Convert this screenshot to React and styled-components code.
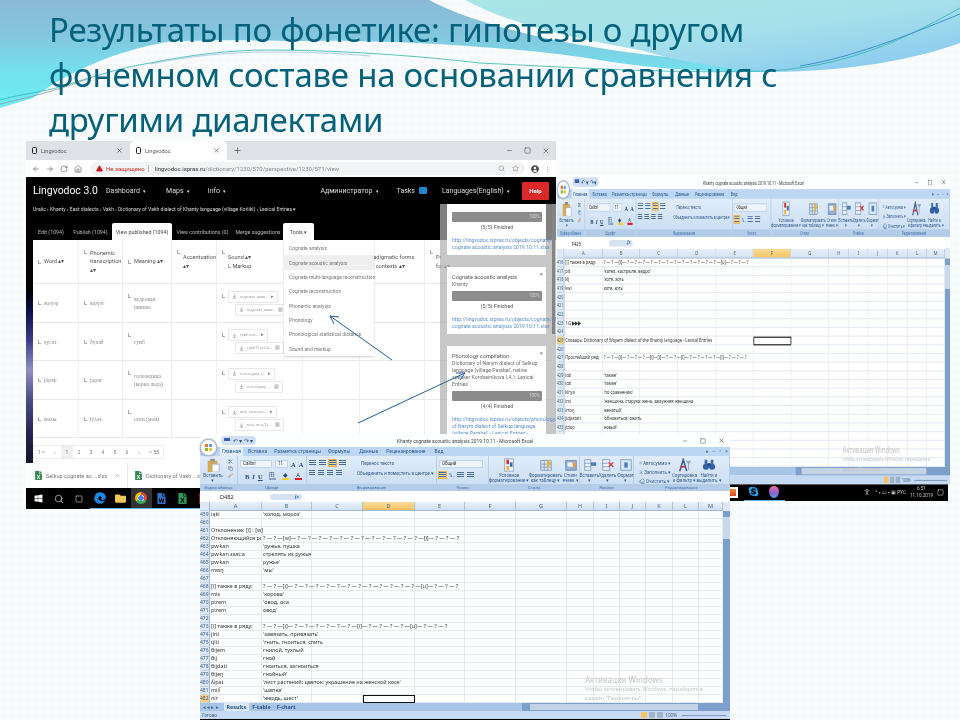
import React from "react";
import styled, { createGlobalStyle } from "styled-components";
import { ArrowLeft, ArrowRight, RotateCw, Home, Search, Star, Plus, X, Minus, Square, ChevronUp, TriangleAlert, PersonStanding, Scissors, Copy, Brush, Sigma, Eraser, ArrowDownToLine } from "lucide-react";
import { FaWindows, FaEdge, FaFolder, FaFileWord, FaFileExcel, FaSkype, FaUserCircle } from "react-icons/fa";

const GlobalStyle = createGlobalStyle`
  * { box-sizing: border-box; }
  html, body { margin: 0; padding: 0; background: #fff; }
  body { font-family: "Noto Sans", sans-serif; }
`;

const Slide = styled.div`
  position: relative;
  width: 960px;
  height: 720px;
  overflow: hidden;
  background: repeating-conic-gradient(#f2f8fa 0 25%, #fff 0 50%) 0 0 / 2px 2px;
`;

const Wave = styled.svg`
  position: absolute;
  top: 0;
  left: 0;
`;

const Title = styled.h1`
  position: relative;
  margin: 0;
  padding: 7px 0 0 49px;
  font: 400 33px/45px "Noto Sans", sans-serif;
  letter-spacing: -0.25px;
  color: #04617b;
  filter: blur(0.25px);
`;

const Arrows = styled.svg`
  position: absolute;
  top: 0;
  left: 0;
  pointer-events: none;
`;

/* ---------- browser window ---------- */

const BrowserWindow = styled.div`
  position: absolute;
  left: 26px;
  top: 141px;
  width: 530px;
  height: 368px;
  display: flex;
  flex-direction: column;
  background: #fff;
  filter: blur(0.35px);
  color: #666;
  font: 400 5.4px Roboto, sans-serif;
`;

const TabStrip = styled.div`
  height: 19px;
  display: flex;
  align-items: stretch;
  background: #dee1e6;
  color: #555;
`;

const BrowserTab = styled.div`
  width: ${(p) => p.$w}px;
  display: flex;
  align-items: center;
  gap: 4px;
  padding: 0 7px 0 6px;
  border-radius: 5px 5px 0 0;
  background: ${(p) => (p.$active ? "#fff" : "transparent")};
  font-size: 5.6px;
  span { flex: 1; }
`;

const PageIcon = styled.i`
  width: 5px;
  height: 7px;
  border: 1.5px solid #222;
  border-radius: 1.5px;
`;

const WinButtons = styled.div`
  margin-left: auto;
  display: flex;
  align-items: center;
  gap: 11px;
  padding-right: 6px;
  color: #555;
`;

const AddressRow = styled.div`
  height: 17px;
  display: flex;
  align-items: center;
  gap: 6px;
  padding: 0 6px;
  color: #666;
`;

const AddressPill = styled.div`
  flex: 1;
  height: 13px;
  display: flex;
  align-items: center;
  gap: 3px;
  padding: 0 6px;
  margin-left: 2px;
  border-radius: 7px;
  background: #f1f3f4;
  font-size: 6px;
  white-space: nowrap;
  color: #8a8a8a;
  b { font-weight: 400; color: #333; }
  em { font-style: normal; color: #d93025; padding-right: 3px; border-right: 1px solid #bbb; margin-right: 3px; }
`;

const NavBar = styled.div`
  height: 63px;
  padding: 0 7px;
  display: flex;
  flex-direction: column;
  background: #000;
  color: #ddd;
`;

const NavTop = styled.div`
  height: 27px;
  display: flex;
  align-items: center;
  font-size: 7px;
`;

const Brand = styled.div`
  flex: none;
  width: 73px;
  font-size: 10.4px;
  color: #fff;
  white-space: nowrap;
`;

const NavItem = styled.div`
  margin-right: ${(p) => p.$gap || 14}px;
  margin-left: ${(p) => (p.$push ? "auto" : "0")};
  white-space: nowrap;
  &::after { content: " ▾"; font-size: 5px; padding-left: 2px; }
`;

const TasksBadge = styled.span`
  display: inline-block;
  width: 8px;
  height: 7px;
  margin: 0 15px 0 4px;
  border-radius: 1px;
  background: #2185d0;
`;

const HelpButton = styled.div`
  flex: none;
  width: 27px;
  height: 18px;
  display: flex;
  align-items: center;
  justify-content: center;
  border-radius: 1px;
  background: #db2828;
  color: #fff;
  font-weight: 700;
  font-size: 6px;
`;

const Breadcrumb = styled.div`
  height: 19px;
  padding-top: 2px;
  font-size: 5.1px;
  color: #ddd;
  white-space: nowrap;
`;

const TabsRow = styled.div`
  flex: 1;
  display: flex;
  align-items: stretch;
  font-size: 5.3px;
`;

const PageTab = styled.div`
  flex: none;
  width: ${(p) => p.$w}px;
  display: flex;
  align-items: center;
  justify-content: center;
  border-radius: 2px 2px 0 0;
  background: ${(p) => (p.$active ? "#fff" : "transparent")};
  color: ${(p) => (p.$active ? "#444" : "#bbb")};
  white-space: nowrap;
`;

const BrowserBody = styled.div`
  position: relative;
  height: 223px;
  display: flex;
  overflow: hidden;
`;

const GalaxyStrip = styled.div`
  flex: none;
  width: 7px;
  background: linear-gradient(#000 0 22%, #0d0d4a 32%, #3c3c8c 45%, #8f8fc0 58%, #4a4a86 72%, #22224e 88%, #15152e);
`;

const DictTable = styled.div`
  flex: 1;
  display: grid;
  grid-template-columns: 46px 44px 49px 45px 86px 57px 65px 131px;
  grid-template-rows: 44px 39px 38px 39px 38px 25px;
`;

const Cell = styled.div`
  display: flex;
  align-items: center;
  gap: 3px;
  padding: 0 4px 0 5px;
  border-right: 1px solid #eee;
  border-bottom: 1px solid #e9e9e9;
  font: ${(p) => (p.$head ? '400 5.6px/8.4px Roboto' : '400 5.6px/8px "Liberation Serif"')};
  color: ${(p) => (p.$head ? "#555" : "#8a8a8a")};
`;

const Elbow = styled.i`
  flex: none;
  align-self: ${(p) => (p.$top ? "flex-start" : "center")};
  display: inline-block;
  width: 3px;
  height: 4px;
  margin-top: ${(p) => (p.$top ? 10 : 0)}px;
  border-left: 1px solid #aaa;
  border-bottom: 1px solid #aaa;
`;

const SoundStack = styled.div`
  display: flex;
  flex-direction: column;
  gap: 1px;
`;

const SoundChip = styled.div`
  height: 12px;
  display: inline-flex;
  align-items: center;
  gap: 3px;
  width: fit-content;
  margin-left: ${(p) => (p.$second ? 7 : 0)}px;
  padding: 0 3px;
  border: 1px solid #e8e8e8;
  border-radius: 1px;
  font-size: 4px;
  color: #999;
  white-space: nowrap;
  svg { color: #777; }
  i { font-style: normal; color: #777; font-size: 5px; }
`;

const ToolsMenu = styled.div`
  position: absolute;
  left: 258px;
  top: 0;
  width: 90px;
  height: 116px;
  display: flex;
  flex-direction: column;
  padding-top: 1px;
  background: #fff;
  box-shadow: 0 1px 2px rgba(0, 0, 0, 0.2);
`;

const MenuItem = styled.div`
  height: 14.4px;
  display: flex;
  align-items: center;
  padding-left: 5px;
  background: ${(p) => (p.$hot ? "#efefef" : "transparent")};
  font-size: 5px;
  color: #777;
  white-space: nowrap;
`;

const Pager = styled.div`
  position: absolute;
  left: 7px;
  top: 205px;
  height: 14px;
  display: flex;
  background: #fff;
  border: 1px solid #eee;
  font-size: 5px;
  color: #777;
`;

const PageNum = styled.div`
  width: ${(p) => p.$w || 12}px;
  display: flex;
  align-items: center;
  justify-content: center;
  background: ${(p) => (p.$on ? "#f0f0f0" : "transparent")};
`;

const Notifications = styled.div`
  position: absolute;
  left: 414px;
  top: 63px;
  width: 116px;
  height: 232px;
  display: flex;
  flex-direction: column;
  gap: 12px;
  padding: 0 10px 0 7px;
  overflow: hidden;
  background: rgba(178, 178, 178, 0.72);
  &::after {
    content: "";
    position: absolute;
    right: 1px;
    top: 0;
    width: 3px;
    height: 130px;
    background: #858585;
  }
`;

const NoteCard = styled.div`
  position: relative;
  flex: none;
  padding: ${(p) => (p.$first ? 3 : 6)}px 4px 4px 5px;
  background: #fff;
  color: #6d6d6d;
  font-size: 5.2px;
  line-height: 7px;
`;

const NoteTitle = styled.div`
  font-size: 5.6px;
  line-height: 8px;
  color: #555;
`;

const NoteClose = styled.span`
  position: absolute;
  right: 3px;
  top: 3px;
  font-size: 6px;
  color: #666;
`;

const Progress = styled.div`
  height: 10px;
  margin-top: ${(p) => (p.$first ? 5 : 3)}px;
  padding-right: 2px;
  border-radius: 1px;
  background: #8c8c8c;
  color: #d5d5d5;
  text-align: right;
  font-size: 4.6px;
  line-height: 10px;
`;

const Finished = styled.div`
  margin-top: 2px;
  text-align: center;
  line-height: 7px;
  color: #555;
`;

const NoteLink = styled.div`
  margin-top: 6px;
  color: #5d8fca;
  white-space: nowrap;
`;

const DownloadBar = styled.div`
  height: 25px;
  display: flex;
  align-items: center;
  padding-left: 8px;
  background: #fff;
  font-size: 5.6px;
  color: #777;
`;

const DownloadItem = styled.div`
  flex: none;
  display: flex;
  align-items: center;
  gap: 3px;
  width: 94px;
  height: 100%;
  padding-left: ${(p) => (p.$sep ? 0 : 6)}px;
  color: #777;
  white-space: nowrap;
  border-right: ${(p) => (p.$sep ? "1px solid #e8e8e8" : "none")};
  svg:first-child { color: #2f8a4f; }
`;

const Taskbar = styled.div`
  height: 21px;
  display: flex;
  align-items: stretch;
  padding-left: 2px;
  background: #000;
  color: #fff;
`;

const TaskSlot = styled.div`
  width: 20.6px;
  display: flex;
  align-items: center;
  justify-content: center;
  background: ${(p) => (p.$on ? "#333" : "transparent")};
  border-bottom: ${(p) => (p.$used ? "1px solid #5fb4e8" : "none")};
  color: ${(p) => p.$color || "#fff"};
`;

const ChromeBall = styled.i`
  width: 12px;
  height: 12px;
  border-radius: 50%;
  background: radial-gradient(#4285f4 0 30%, #fff 31% 38%, transparent 39%), conic-gradient(#ea4335 0 33%, #34a853 33% 66%, #fbbc05 66%);
`;

const PinkDrop = styled.i`
  width: 10px;
  height: 12px;
  border-radius: 50% 50% 50% 50% / 40% 40% 60% 60%;
  background: linear-gradient(#f06da8, #8b5fd0 60%, #3ab0e0);
`;

const OrangeTile = styled.i`
  width: 10px;
  height: 11px;
  background: linear-gradient(#ef8b3c, #d84a2b);
  border: 2px solid #fff;
`;

/* ---------- excel window ---------- */

const ExcelFrame = styled.div`
  position: absolute;
  left: ${(p) => p.$x}px;
  top: ${(p) => p.$y}px;
  width: 530px;
  display: flex;
  flex-direction: column;
  transform-origin: 0 0;
  transform: scale(${(p) => p.$sx}, ${(p) => p.$sy});
  background: #fff;
  filter: blur(0.3px);
  color: #333;
  font-size: 5.45px;
`;

const TitleBar = styled.div`
  position: relative;
  height: 13px;
  display: flex;
  align-items: center;
  justify-content: center;
  background: #fdfeff;
  color: #444;
  font: 400 4.9px Roboto, sans-serif;
`;

const QuickAccess = styled.div`
  position: absolute;
  left: 21px;
  top: 2px;
  height: 9px;
  display: flex;
  align-items: center;
  gap: 3px;
  padding: 0 3px;
  border-radius: 4px;
  background: #cfe0f5;
  color: #1f4e8a;
  font-size: 6px;
`;

const SaveIcon = styled.i`
  width: 6px;
  height: 6px;
  background: linear-gradient(#3a5fb0 0 55%, #d8e4f4 55%);
`;

const OfficeButton = styled.div`
  position: absolute;
  left: 0;
  top: 5px;
  z-index: 2;
  width: 17px;
  height: 17px;
  display: grid;
  grid-template-columns: 1fr 1fr;
  gap: 1px;
  padding: 4px;
  border-radius: 50%;
  background: #fff;
  border: 1px solid #a9b9cc;
  box-shadow: 0 0 2px #7a8aa0;
  i:nth-child(1) { background: #e8762b; }
  i:nth-child(2) { background: #5aa8de; }
  i:nth-child(3) { background: #8cb63c; }
  i:nth-child(4) { background: #f2c230; }
`;

const FrameControls = styled.div`
  position: absolute;
  right: 5px;
  top: 0;
  height: 13px;
  display: flex;
  align-items: center;
  gap: 12px;
  color: #555;
`;

const RibbonTabs = styled.div`
  position: relative;
  height: 9px;
  display: flex;
  padding-left: 20px;
  background: #bcd6f3;
  color: #2a5a94;
  font: 400 5px/9px Roboto, sans-serif;
`;

const RibbonTab = styled.div`
  padding: 0 2px;
  margin-right: ${(p) => p.$gap || 3}px;
  border-radius: 2px 2px 0 0;
  background: ${(p) => (p.$active ? "#e3eefb" : "transparent")};
  white-space: nowrap;
`;

const RibbonHelp = styled.div`
  position: absolute;
  right: 2px;
  top: 0;
  display: flex;
  gap: 4px;
  color: #3e6cab;
  font-size: 5px;
`;

const Ribbon = styled.div`
  height: 35px;
  display: flex;
  background: linear-gradient(#e0ecfa, #c8dcf3);
  color: #34598c;
  font: 400 4.5px Roboto, sans-serif;
`;

const Group = styled.div`
  flex: none;
  width: ${(p) => p.$w}px;
  display: flex;
  flex-direction: column;
  border-right: 1px solid #b8cde6;
`;

const GroupBody = styled.div`
  flex: 1;
  min-height: 0;
  display: flex;
  align-items: ${(p) => (p.$stack ? "stretch" : "flex-start")};
  flex-direction: ${(p) => (p.$stack ? "column" : "row")};
  gap: ${(p) => (p.$stack ? 4 : 1)}px;
  padding: ${(p) => (p.$stack ? "4px 2px 0" : "2px 0 0 1px")};
`;

const GroupLabel = styled.div`
  flex: none;
  height: 7px;
  text-align: center;
  background: #b3cde9;
  color: #4472a8;
  font-size: 4.2px;
  line-height: 7px;
`;

const BigTool = styled.div`
  flex: none;
  width: ${(p) => p.$w}px;
  display: flex;
  flex-direction: column;
  align-items: center;
  gap: 1px;
  text-align: center;
  line-height: 5px;
  white-space: pre;
`;

const SmallTools = styled.div`
  flex: none;
  display: flex;
  flex-direction: column;
  justify-content: ${(p) => (p.$wide ? "flex-start" : "space-around")};
  gap: ${(p) => (p.$wide ? 3 : 2)}px;
  width: ${(p) => (p.$wide ? 36 : 8)}px;
  padding: ${(p) => (p.$wide ? "2px 0 0 4px" : "1px 0 0 2px")};
  color: #3a6298;
`;

const SmallTool = styled.div`
  display: flex;
  align-items: center;
  gap: 1px;
  white-space: nowrap;
`;

const ToolRow = styled.div`
  display: flex;
  align-items: center;
  gap: 3px;
  white-space: nowrap;
`;

const ToolLabel = styled.span`
  margin-left: ${(p) => p.$m}px;
`;

const Combo = styled.div`
  width: ${(p) => p.$w}px;
  height: 8px;
  padding-left: 2px;
  background: #eef4fb;
  border: 1px solid #c3d5ea;
  color: #333;
  line-height: 6px;
`;

const Fmt = styled.span`
  font: ${(p) => (p.$i ? "italic" : "normal")} 700 6.5px "Liberation Serif", serif;
  color: ${(p) => p.$c || "#27477c"};
  text-decoration: ${(p) => (p.$u ? "underline" : "none")};
`;

const ColorBar = styled.span`
  width: 7px;
  height: 8px;
  margin-left: 3px;
  border-bottom: 2px solid ${(p) => p.$c};
  color: #27477c;
  text-align: center;
  line-height: 6px;
  font-size: 5.6px;
`;

const AlignBtn = styled.i`
  width: 7px;
  height: 6px;
  background: repeating-linear-gradient(#4a6a96 0 1px, transparent 1px 2px);
  outline: ${(p) => (p.$on ? "1px solid #f0b040" : "none")};
  background-color: ${(p) => (p.$on ? "#fbd58a" : "transparent")};
`;

const FormulaBar = styled.div`
  height: 8px;
  margin-top: 2px;
  display: flex;
  align-items: center;
  background: #fff;
  font-size: 5.6px;
`;

const NameBox = styled.div`
  width: 70px;
  padding-left: 20px;
  color: #222;
`;

const FxBox = styled.div`
  width: 32px;
  height: 6px;
  border-radius: 3px;
  background: #d4e2f2;
  color: #2d5d95;
  text-align: right;
  padding-right: 3px;
  font: italic 700 5px/6px "Liberation Serif", serif;
`;

const SheetWrap = styled.div`
  position: relative;
  display: flex;
  flex: none;
`;

const Sheet = styled.div`
  width: 523px;
  margin-top: 1px;
  display: flex;
  flex-direction: column;
`;

const SheetRow = styled.div`
  display: flex;
  height: ${(p) => (p.$head ? 9 : 8)}px;
`;

const RowHead = styled.div`
  flex: none;
  width: 10px;
  padding-right: 1px;
  text-align: right;
  background: ${(p) => (p.$on ? "#f9cf7e" : "#dfe9f5")};
  border-right: 1px solid #9db8d8;
  border-bottom: 1px solid #c6d6e9;
  color: #3d5f8c;
  font-size: 5px;
  line-height: 7px;
`;

const ColHead = styled.div`
  flex: none;
  width: ${(p) => p.$w}px;
  text-align: center;
  background: ${(p) => (p.$on ? "linear-gradient(#f9dc9b, #f5c362)" : "linear-gradient(#eaf1fa, #d2e0f1)")};
  border-right: 1px solid #a9c1de;
  border-bottom: 1px solid #9db8d8;
  color: #3d5f8c;
  font-size: 5.6px;
  line-height: 8px;
`;

const GridCell = styled.div`
  position: relative;
  flex: none;
  width: ${(p) => p.$w}px;
  padding-left: 1px;
  border-right: 1px solid #e4eaf3;
  border-bottom: 1px solid #e4eaf3;
  line-height: 7px;
  white-space: nowrap;
  overflow: ${(p) => (p.$clip ? "hidden" : "visible")};
  outline: ${(p) => (p.$selected ? "1px solid #111" : "none")};
  outline-offset: -1px;
  span { position: relative; z-index: 1; }
`;

const VScroll = styled.div`
  width: 7px;
  margin-top: 1px;
  display: flex;
  flex-direction: column;
  background: #7c9fcc;
  &::before { content: ""; height: 9px; background: #dfe9f5; }
  &::after { content: ""; height: 22px; margin-top: 6px; background: #c9d9ec; }
`;

const Watermark = styled.div`
  position: absolute;
  left: ${(p) => p.$x}px;
  top: ${(p) => p.$y}px;
  color: #c6c6c6;
  font-size: 5.6px;
  line-height: 9px;
  white-space: nowrap;
  z-index: 3;
  strong { display: block; font-weight: 400; font-size: 8px; line-height: 10px; }
`;

const SheetTabs = styled.div`
  height: 8px;
  display: flex;
  align-items: center;
  background: #a9c5e6;
  color: #23508c;
  font-size: 5.4px;
  font-weight: 700;
`;

const TabArrows = styled.span`
  padding: 0 5px 0 3px;
  color: #4a6a96;
  font-size: 4.5px;
`;

const SheetTab = styled.span`
  padding: 0 3px;
  background: ${(p) => (p.$on ? "#dce9f8" : "transparent")};
`;

const HScroll = styled.div`
  margin-left: auto;
  width: 208px;
  height: 8px;
  padding: 1px 8px 1px 8px;
  background: #7c9fcc;
  &::before { content: ""; display: block; width: 168px; height: 100%; background: #c3d2e4; }
`;

const StatusBar = styled.div`
  height: 8px;
  display: flex;
  align-items: center;
  justify-content: space-between;
  padding-left: 2px;
  background: #c6dbf3;
  color: #3b628f;
  font-size: 4.6px;
`;

const ViewButtons = styled.div`
  display: flex;
  align-items: center;
  gap: 2px;
  padding-right: 4px;
  i { width: 6px; height: 6px; background: #9fb3c9; }
  i:first-child { background: #f3c468; }
  b { width: 44px; height: 1px; margin-left: 3px; background: #7f9cc0; }
`;

const BlackEdge = styled.div`
  height: 2px;
  background: #000;
`;

const RightTaskbar = styled.div`
  position: absolute;
  left: 557px;
  top: 483px;
  width: 391px;
  height: 18px;
  display: flex;
  align-items: stretch;
  padding-left: 166px;
  background: #000;
  color: #ccc;
  filter: blur(0.3px);
`;

const Tray = styled.div`
  margin-left: auto;
  display: flex;
  align-items: center;
  gap: 4px;
  padding-right: 4px;
  font: 400 4.6px Roboto, sans-serif;
  white-space: nowrap;
`;

const Clock = styled.div`
  text-align: center;
  line-height: 7px;
`;

const Tile = styled.svg`
  flex: none;
`;

/* big ribbon pictures, one little svg per kind */
const ToolGlyph = ({ kind, size = 14 }) => {
  const shapes = {
    paste: (
      <>
        <rect x="2" y="3" width="11" height="13" fill="#d9a94a" />
        <rect x="5" y="1" width="5" height="3" fill="#8a8f99" />
        <rect x="7" y="7" width="8" height="9" fill="#fff" stroke="#9fb3c9" />
      </>
    ),
    cond: (
      <>
        <rect x="3" y="1" width="10" height="14" fill="#eef3fa" stroke="#8ea6c4" />
        <rect x="5" y="2" width="3" height="5" fill="#d8372b" />
        <rect x="9" y="5" width="3" height="5" fill="#3768b8" />
        <rect x="5" y="9" width="3" height="5" fill="#f2b632" />
      </>
    ),
    table: (
      <>
        <rect x="2" y="3" width="12" height="11" fill="#dbe7f5" stroke="#7f9cc0" />
        <path d="M2 7h12M2 10.500h12M6 3v11M10 3v11" stroke="#7f9cc0" />
        <path d="M9 1l5 5-5 7z" fill="#e4b24a" />
      </>
    ),
    style: (
      <>
        <rect x="2" y="3" width="12" height="11" fill="#8fb0d8" stroke="#6a8ab4" />
        <rect x="4" y="5" width="8" height="5" fill="#e8f0fa" />
        <path d="M9 2l5 6-3 5z" fill="#e89a3c" />
      </>
    ),
    insert: (
      <>
        <rect x="2" y="2" width="7" height="12" fill="#eef3fa" stroke="#7f9cc0" />
        <path d="M2 6h7M2 10h7" stroke="#7f9cc0" />
        <rect x="9" y="5" width="6" height="4" fill="#4a7fc0" />
      </>
    ),
    remove: (
      <>
        <rect x="2" y="2" width="8" height="12" fill="#eef3fa" stroke="#7f9cc0" />
        <path d="M2 6h8M2 10h8" stroke="#7f9cc0" />
        <path d="M9 5l5 5M14 5l-5 5" stroke="#d8372b" strokeWidth="1.600" />
      </>
    ),
    format: (
      <>
        <rect x="2" y="2" width="12" height="12" fill="#dbe7f5" stroke="#7f9cc0" />
        <rect x="6" y="5" width="4" height="6" fill="#4a7fc0" />
      </>
    ),
    sort: (
      <>
        <path d="M2 15L6 2l4 13" fill="none" stroke="#3a5f9a" strokeWidth="1.800" />
        <path d="M9 3h6l-2.500 4v6l-1 1V7z" fill="#9aa7b8" />
        <rect x="3" y="9" width="5" height="2" fill="#d8372b" />
      </>
    ),
    find: (
      <>
        <circle cx="4.500" cy="10" r="3.500" fill="#2e5fa8" />
        <circle cx="11.500" cy="10" r="3.500" fill="#2e5fa8" />
        <rect x="3" y="2" width="3" height="6" fill="#3a6ab5" />
        <rect x="10" y="2" width="3" height="6" fill="#3a6ab5" />
        <rect x="6" y="6" width="4" height="3" fill="#24497f" />
      </>
    ),
  };
  return (
    <Tile width={size} height={size} viewBox="0 0 16 16">
      {shapes[kind]}
    </Tile>
  );
};

const rightRows = {
  416: ["[i] также в ряду:", "? — ? —[i]— ? — ? — ? — ? — ? — ? — ? — ? — ? — ? — ? — ? —[u]— ? — ? — ?"],
  417: ["pit", "'котел, кастрюля, ведро'"],
  418: ["kǐj", "'хотя, хоть"],
  419: ["kwǐ", "хотя, хоть'"],
  423: ["1.G ▶▶▶", ""],
  425: ["Словарь:  Dictionary of Woyam dialect of the Khanty language - Lexical Entries", ""],
  427: ["Простейший ряд:", "? — ? —[i]— ? — ? — ? —[i]—[i]— ? — ? —[i]— ? — ? — ? — ? —[i]— ? — ? — ?"],
  429: ["iαti", "'также'"],
  430: ["iαti", "'также'"],
  431: ["kǐrχa", "'по сравнению'"],
  432: ["imi", "'женщина, старуха; жена, замужняя женщина"],
  433: ["imɔŋ", "женатый'"],
  434: ["jidpatati", "'обновиться; ожить"],
  435: ["jidup", "новый'"],
  436: ["jidɔŋ", "'зрелище (?)"],
};

const bottomRows = {
  459: ["iąki", "'холод, мороз'"],
  461: ["Отклонение:  [i] : [w]", ""],
  462: ["Отклоняющийся ряд:", "? — ? —[w]— ? — ? — ? — ? — ? — ? — ? — ? — ? — ? — ? — ? —[i]— ? — ? — ?"],
  463: ["pwʲkan", "'ружье, пушка"],
  464: ["pwʲkan εsat:a", "стрелять из ружья"],
  465: ["pwʲkan", "ружье'"],
  466: ["mwŋ", "'мы'"],
  468: ["[i] также в ряду:", "  ? — ? —[i]— ? — ? — ? — ? — ? — ? — ? — ? — ? — ? — ? — ? —[u]— ? — ? — ?"],
  469: ["mis", "'корова'"],
  470: ["pirem", "'овод, оса"],
  471: ["pirem", "овод'"],
  473: ["[i] также в ряду:", "  ? — ? —[i]— ? — ? — ? — ? — ? — ? —[i]— ? — ? — ? — ? —[u]— ? — ? — ?"],
  474: ["jirti", "'завязать, привязать'"],
  475: ["tįlti", "'гнить, гноиться, спить"],
  476: ["θijem", "гнилой, тухлый"],
  477: ["θij", "гной"],
  478: ["θijdati", "гноиться, загноиться"],
  479: ["θijeŋ", "гнойный'"],
  480: ["ʎipat", "'лист растений; цветок; украшение на женской косе'"],
  481: ["miʎ", "'шапка'"],
  482: ["nir", "'жердь, шест'"],
};

const columns = [
  ["A", 52], ["B", 50], ["C", 51], ["D", 52], ["E", 50], ["F", 51], ["G", 51],
  ["H", 27], ["I", 26], ["J", 26], ["K", 27], ["L", 26], ["M", 24],
];

function Excel({ x, y, sx, sy, title, cell, start, rows, activeCol, activeRow, watermark, children }) {
  const rowNums = Array.from({ length: 24 }, (_, i) => start + i);
  return (
    <ExcelFrame $x={x} $y={y} $sx={sx} $sy={sy}>
      <OfficeButton><i /><i /><i /><i /></OfficeButton>
      <TitleBar>
        <QuickAccess><SaveIcon />↶ ▾ ↷ ▾</QuickAccess>
        {title}
        <FrameControls>
          <Minus size={6} />
          <Square size={6} />
          <X size={7} />
        </FrameControls>
      </TitleBar>
      <RibbonTabs>
        <RibbonTab $active>Главная</RibbonTab>
        <RibbonTab>Вставка</RibbonTab>
        <RibbonTab>Разметка страницы</RibbonTab>
        <RibbonTab $gap={5}>Формулы</RibbonTab>
        <RibbonTab $gap={4}>Данные</RibbonTab>
        <RibbonTab $gap={5}>Рецензирование</RibbonTab>
        <RibbonTab>Вид</RibbonTab>
        <RibbonHelp><span>●</span><span>–</span><span>▫</span><span>×</span></RibbonHelp>
      </RibbonTabs>
      <Ribbon>
        <Group $w={38}>
          <GroupBody>
            <BigTool $w={24}><ToolGlyph kind="paste" />Вставить{"\n"}▾</BigTool>
            <SmallTools>
              <Scissors size={5} />
              <Copy size={5} />
              <Brush size={5} color="#b98a2c" />
            </SmallTools>
          </GroupBody>
          <GroupLabel>Буфер обмена</GroupLabel>
        </Group>
        <Group $w={69}>
          <GroupBody $stack>
            <ToolRow><Combo $w={32}>Calibri</Combo><Combo $w={13}>11</Combo><Fmt>A</Fmt><Fmt>A</Fmt></ToolRow>
            <ToolRow>
              <ToolLabel $m={2} />
              <Fmt>B</Fmt><Fmt $i>I</Fmt><Fmt $u>U</Fmt>
              <ColorBar $c="#8aa4c4">田</ColorBar>
              <ColorBar $c="#f5d020">◆</ColorBar>
              <ColorBar $c="#e01b1b">A</ColorBar>
            </ToolRow>
          </GroupBody>
          <GroupLabel>Шрифт</GroupLabel>
        </Group>
        <Group $w={130}>
          <GroupBody $stack>
            <ToolRow>
              <AlignBtn /><AlignBtn /><AlignBtn $on /><AlignBtn />
              <ToolLabel $m={12}>Перенос текста</ToolLabel>
            </ToolRow>
            <ToolRow>
              <AlignBtn /><AlignBtn /><AlignBtn /><AlignBtn />
              <ToolLabel $m={12}>Объединить и поместить в центре ▾</ToolLabel>
            </ToolRow>
          </GroupBody>
          <GroupLabel>Выравнивание</GroupLabel>
        </Group>
        <Group $w={52}>
          <GroupBody $stack>
            <Combo $w={44}>Общий</Combo>
            <ToolRow><AlignBtn $on />% ,<AlignBtn /><AlignBtn /></ToolRow>
          </GroupBody>
          <GroupLabel>Число</GroupLabel>
        </Group>
        <Group $w={91}>
          <GroupBody>
            <BigTool $w={38}><ToolGlyph kind="cond" />Условное{"\n"}форматирование ▾</BigTool>
            <BigTool $w={33}><ToolGlyph kind="table" />Форматировать{"\n"}как таблицу ▾</BigTool>
            <BigTool $w={15}><ToolGlyph kind="style" />Стили{"\n"}ячеек ▾</BigTool>
          </GroupBody>
          <GroupLabel>Стили</GroupLabel>
        </Group>
        <Group $w={54}>
          <GroupBody>
            <BigTool $w={17}><ToolGlyph kind="insert" />Вставить{"\n"}▾</BigTool>
            <BigTool $w={17}><ToolGlyph kind="remove" />Удалить{"\n"}▾</BigTool>
            <BigTool $w={17}><ToolGlyph kind="format" />Формат{"\n"}▾</BigTool>
          </GroupBody>
          <GroupLabel>Ячейки</GroupLabel>
        </Group>
        <Group $w={96}>
          <GroupBody>
            <SmallTools $wide>
              <SmallTool><Sigma size={6} />Автосумма ▾</SmallTool>
              <SmallTool><ArrowDownToLine size={6} />Заполнить ▾</SmallTool>
              <SmallTool><Eraser size={6} />Очистить ▾</SmallTool>
            </SmallTools>
            <BigTool $w={25}><ToolGlyph kind="sort" />Сортировка{"\n"}и фильтр ▾</BigTool>
            <BigTool $w={22}><ToolGlyph kind="find" />Найти и{"\n"}выделить ▾</BigTool>
          </GroupBody>
          <GroupLabel>Редактирование</GroupLabel>
        </Group>
      </Ribbon>
      <FormulaBar>
        <NameBox>{cell}</NameBox>
        <FxBox>fx</FxBox>
      </FormulaBar>
      <SheetWrap>
        <Sheet>
          <SheetRow $head>
            <RowHead />
            {columns.map(([name, w], i) => (
              <ColHead key={name} $w={w} $on={i === activeCol}>{name}</ColHead>
            ))}
          </SheetRow>
          {rowNums.map((n) => {
            const [a, b] = rows[n] || ["", ""];
            return (
              <SheetRow key={n}>
                <RowHead $on={n === activeRow}>{n}</RowHead>
                {columns.map(([name, w], i) => (
                  <GridCell key={name} $w={w} $clip={i === 0 && !!b} $selected={n === activeRow && i === activeCol}>
                    {i === 0 && <span>{a}</span>}
                    {i === 1 && <span>{b}</span>}
                  </GridCell>
                ))}
              </SheetRow>
            );
          })}
        </Sheet>
        <VScroll />
        <Watermark $x={watermark[0]} $y={watermark[1]}>
          <strong>Активация Windows</strong>
          Чтобы активировать Windows, перейдите в
          <br />
          раздел "Параметры".
        </Watermark>
      </SheetWrap>
      <SheetTabs>
        <TabArrows>◂ ◂ ▸ ▸</TabArrows>
        <SheetTab $on>Results</SheetTab>
        <SheetTab>F-table</SheetTab>
        <SheetTab>F-chart</SheetTab>
        <HScroll />
      </SheetTabs>
      <StatusBar>
        Готово
        <ViewButtons><i /><i /><i /><span>100%</span><b /></ViewButtons>
      </StatusBar>
      {children}
    </ExcelFrame>
  );
}

const dictRows = [
  ["жоүэр", "юрүэг", "кедровая шишка", ["кедровая_шиш...", "кедровая_шиш..."]],
  ["ęүсәт", "ðүхәð", "гуиб", ["гриб.wav...", "гриб.Text.Gri..."]],
  ["jŏрәр", "joрәг", "гололедица (корка льда)", ["гололедица_t...", "гололедица_..."]],
  ["мәλы", "ǐүλәs", "отец (мой)", ["мой_отец.wav...", "мой_отец.Тe..."]],
];

const menuItems = [
  "Cognate analysis", "Cognate acoustic analysis", "Cognate multi-language reconstruction",
  "Cognate reconstruction", "Phonemic analysis", "Phonology",
  "Phonological statistical distance", "Sound and markup",
];

function Browser() {
  return (
    <BrowserWindow>
      <TabStrip>
        <BrowserTab $w={104}><PageIcon /><span>Lingvodoc</span><X size={7} /></BrowserTab>
        <BrowserTab $w={97} $active><PageIcon /><span>Lingvodoc</span><X size={7} /></BrowserTab>
        <Plus size={9} style={{ alignSelf: "center", marginLeft: 6 }} />
        <WinButtons><Minus size={7} /><Square size={7} /><X size={8} /></WinButtons>
      </TabStrip>
      <AddressRow>
        <ArrowLeft size={8} />
        <ArrowRight size={8} />
        <RotateCw size={8} />
        <Home size={8} />
        <AddressPill>
          <TriangleAlert size={7} color="#c5221f" fill="#c5221f" stroke="#c5221f" />
          <em>Не защищено</em>
          <span><b>lingvodoc.ispras.ru</b>/dictionary/1230/570/perspective/1230/571/view</span>
          <Search size={7} style={{ marginLeft: "auto" }} />
          <Star size={7} style={{ marginLeft: 4 }} />
        </AddressPill>
        <FaUserCircle size={8} color="#444" />
        <span>⋮</span>
      </AddressRow>
      <NavBar>
        <NavTop>
          <Brand>Lingvodoc 3.0</Brand>
          <NavItem $gap={20}>Dashboard</NavItem>
          <NavItem $gap={18}>Maps</NavItem>
          <NavItem>Info</NavItem>
          <NavItem $push $gap={18}>Администратор</NavItem>
          <span>Tasks</span><TasksBadge />
          <NavItem $gap={12}>Languages(English)</NavItem>
          <HelpButton>Help</HelpButton>
        </NavTop>
        <Breadcrumb>Uralic › Khanty › East dialects › Vakh › Dictionary of Vakh dialect of Khanty language (village Korliki) › Lexical Entries ▾</Breadcrumb>
        <TabsRow>
          <PageTab $w={36}>Edit (1094)</PageTab>
          <PageTab $w={43}>Publish (1094)</PageTab>
          <PageTab $w={60} $active>View published (1094)</PageTab>
          <PageTab $w={61}>View contributions (0)</PageTab>
          <PageTab $w={50}>Merge suggestions</PageTab>
          <PageTab $w={31} $active>Tools ▾</PageTab>
        </TabsRow>
      </NavBar>
      <BrowserBody>
        <GalaxyStrip />
        <DictTable>
          <Cell $head><Elbow />Word ▴▾</Cell>
          <Cell $head><Elbow $top /><span>Phonemic transcription ▴▾</span></Cell>
          <Cell $head><Elbow />Meaning ▴▾</Cell>
          <Cell $head><Elbow $top /><span>Accentuation ▴▾</span></Cell>
          <Cell $head>
            <Elbow $top />
            <span>Sound ▴▾<br /><Elbow /> Markup</span>
          </Cell>
          <Cell $head />
          <Cell $head><span>Paradigmatic forms and contexts ▴▾</span></Cell>
          <Cell $head><Elbow $top /><span>Pr.<br />for ▴▾</span></Cell>
          {dictRows.map(([word, phon, meaning, sounds]) => (
            <React.Fragment key={word}>
              <Cell><Elbow />{word}</Cell>
              <Cell><Elbow />{phon}</Cell>
              <Cell><Elbow $top /><span>{meaning}</span></Cell>
              <Cell />
              <Cell>
                <Elbow $top />
                <SoundStack>
                  <SoundChip><ArrowDownToLine size={5} />{sounds[0]}<i>▸</i></SoundChip>
                  <SoundChip $second><ArrowDownToLine size={5} />{sounds[1]}<i>▥</i></SoundChip>
                </SoundStack>
              </Cell>
              <Cell />
              <Cell />
              <Cell />
            </React.Fragment>
          ))}
        </DictTable>
        <ToolsMenu>
          {menuItems.map((item, i) => (
            <MenuItem key={item} $hot={i === 1}>{item}</MenuItem>
          ))}
        </ToolsMenu>
        <Pager>
          <PageNum $w={15}>1 ~</PageNum>
          <PageNum>‹</PageNum>
          <PageNum $on>1</PageNum>
          {[2, 3, 4, 5, 6].map((n) => <PageNum key={n}>{n}</PageNum>)}
          <PageNum>›</PageNum>
          <PageNum $w={18}>~ 55</PageNum>
        </Pager>
      </BrowserBody>
      <Notifications>
        <NoteCard $first>
          <Progress $first>100%</Progress>
          <Finished>(5/5) Finished</Finished>
          <NoteLink>http://lingvodoc.ispras.ru/objects/cognate/51<br />cognate acoustic analysis 2019.10.11.xlsx</NoteLink>
        </NoteCard>
        <NoteCard>
          <NoteClose>×</NoteClose>
          <NoteTitle>Cognate acoustic analysis</NoteTitle>
          Khanty
          <Progress>100%</Progress>
          <Finished>(5/5) Finished</Finished>
          <NoteLink>http://lingvodoc.ispras.ru/objects/cognate/58<br />cognate acoustic analysis 2019.10.11.xlsx</NoteLink>
        </NoteCard>
        <NoteCard>
          <NoteClose>×</NoteClose>
          <NoteTitle>Phonology compilation</NoteTitle>
          Dictionary of Narym dialect of Selkup
          <br />
          language (village Parabel', native
          <br />
          speaker Korobeinikova I.A.): Lexical
          <br />
          Entries
          <Progress>100%</Progress>
          <Finished>(4/4) Finished</Finished>
          <NoteLink>http://lingvodoc.ispras.ru/objects/phonology/<br />of Narym dialect of Selkup language<br />(village Parabel' - Lexical Entries -</NoteLink>
        </NoteCard>
      </Notifications>
      <DownloadBar>
        <DownloadItem $sep><FaFileExcel size={9} />Selkup cognate ac....xlsx<ChevronUp size={7} style={{ marginLeft: 4 }} /></DownloadItem>
        <DownloadItem><FaFileExcel size={9} />Dictionary of Vakh....xlsx</DownloadItem>
      </DownloadBar>
      <Taskbar>
        <TaskSlot><FaWindows size={9} /></TaskSlot>
        <TaskSlot $color="#bbb"><Search size={10} /></TaskSlot>
        <TaskSlot $color="#bbb"><Square size={8} /></TaskSlot>
        <TaskSlot $used $color="#1e88e5"><FaEdge size={12} /></TaskSlot>
        <TaskSlot $used $color="#f2c45a"><FaFolder size={11} /></TaskSlot>
        <TaskSlot $on $used><ChromeBall /></TaskSlot>
        <TaskSlot $used $color="#2f6fc4"><FaFileWord size={11} /></TaskSlot>
        <TaskSlot $used $color="#2e9a56"><FaFileExcel size={11} /></TaskSlot>
        <TaskSlot $used $color="#d8372b"><FaFileWord size={11} /></TaskSlot>
      </Taskbar>
    </BrowserWindow>
  );
}

export default function App() {
  return (
    <Slide>
      <GlobalStyle />
      <Wave width="960" height="120" viewBox="0 0 960 120">
        <defs>
          <linearGradient id="waveLeft" gradientUnits="userSpaceOnUse" x1="0" y1="0" x2="0" y2="100">
            <stop offset="0" stopColor="#8ab9d6" />
            <stop offset="0.35" stopColor="#84c6dd" />
            <stop offset="0.7" stopColor="#74e0ee" />
            <stop offset="1" stopColor="#6eeaf3" />
          </linearGradient>
          <linearGradient id="waveRight" x1="0" y1="0" x2="1" y2="1">
            <stop offset="0" stopColor="#a9e6e6" />
            <stop offset="0.5" stopColor="#a5e0ea" />
            <stop offset="1" stopColor="#84c6f2" />
          </linearGradient>
        </defs>
        <path d="M0 0H429C490 32 600 52 700 60L770 72C700 72 650 68 612 62C570 55 530 50 480 47C420 42 350 40 300 41C240 40 200 40 167 42C120 50 70 70 33 98L0 108Z" fill="url(#waveLeft)" />
        <path d="M465 0H960V43C920 58 850 72 770 72C720 68 680 62 640 50C570 38 510 24 465 0Z" fill="url(#waveRight)" />
        <path d="M0 100C20 94 45 92 67 85C95 76 120 68 150 63C190 55 230 50 267 50C340 50 420 56 480 63C580 68 680 74 770 71C860 65 920 30 960 8" fill="none" stroke="#2fb5a8" strokeWidth="0.8" />
        <path d="M800 66C860 56 920 30 960 14" fill="none" stroke="#3f8fd0" strokeWidth="1" />
        <path d="M150 64C190 56 230 52 267 52C300 52 340 53 370 56" fill="none" stroke="#7fb0d8" strokeWidth="0.6" />
        <path d="M0 104C30 97 60 90 90 78" fill="none" stroke="#8e9aa0" strokeWidth="0.8" />
      </Wave>
      <Title>
        Результаты по фонетике: гипотезы о другом
        <br />
        фонемном составе на основании сравнения с
        <br />
        другими диалектами
      </Title>
      <Browser />
      <Arrows width="960" height="720" viewBox="0 0 960 720">
        <g fill="none" stroke="#1f5f9f" strokeWidth="1">
          <path d="M392 360L330 316M330 316l9 1M330 316l4 8" />
          <path d="M358 423L465 373M465 373l-9 0M465 373l-5 7" />
        </g>
      </Arrows>
      <RightTaskbar>
        <TaskSlot><OrangeTile /></TaskSlot>
        <TaskSlot $used $color="#2f9fe0"><FaSkype size={11} /></TaskSlot>
        <TaskSlot $used><PinkDrop /></TaskSlot>
        <Tray>
          <PersonStanding size={8} />
          <span>^ ◖ ▭ ▪ ▣ РУС</span>
          <Clock>6:51<br />11.10.2019</Clock>
          <Square size={7} />
        </Tray>
      </RightTaskbar>
      <Excel
        x={557} y={175} sx={0.7415} sy={1.085}
        title="Khanty cognate acoustic analysis 2019.10.11 - Microsoft Excel"
        cell="F425" start={416} rows={rightRows} activeCol={5} activeRow={425}
        watermark={[385, 181]}
      />
      <Excel
        x={200} y={434} sx={1} sy={1}
        title="Khanty cognate acoustic analysis 2019.10.11 - Microsoft Excel"
        cell="D482" start={459} rows={bottomRows} activeCol={3} activeRow={482}
        watermark={[385, 174]}
      >
        <BlackEdge />
      </Excel>
    </Slide>
  );
}
